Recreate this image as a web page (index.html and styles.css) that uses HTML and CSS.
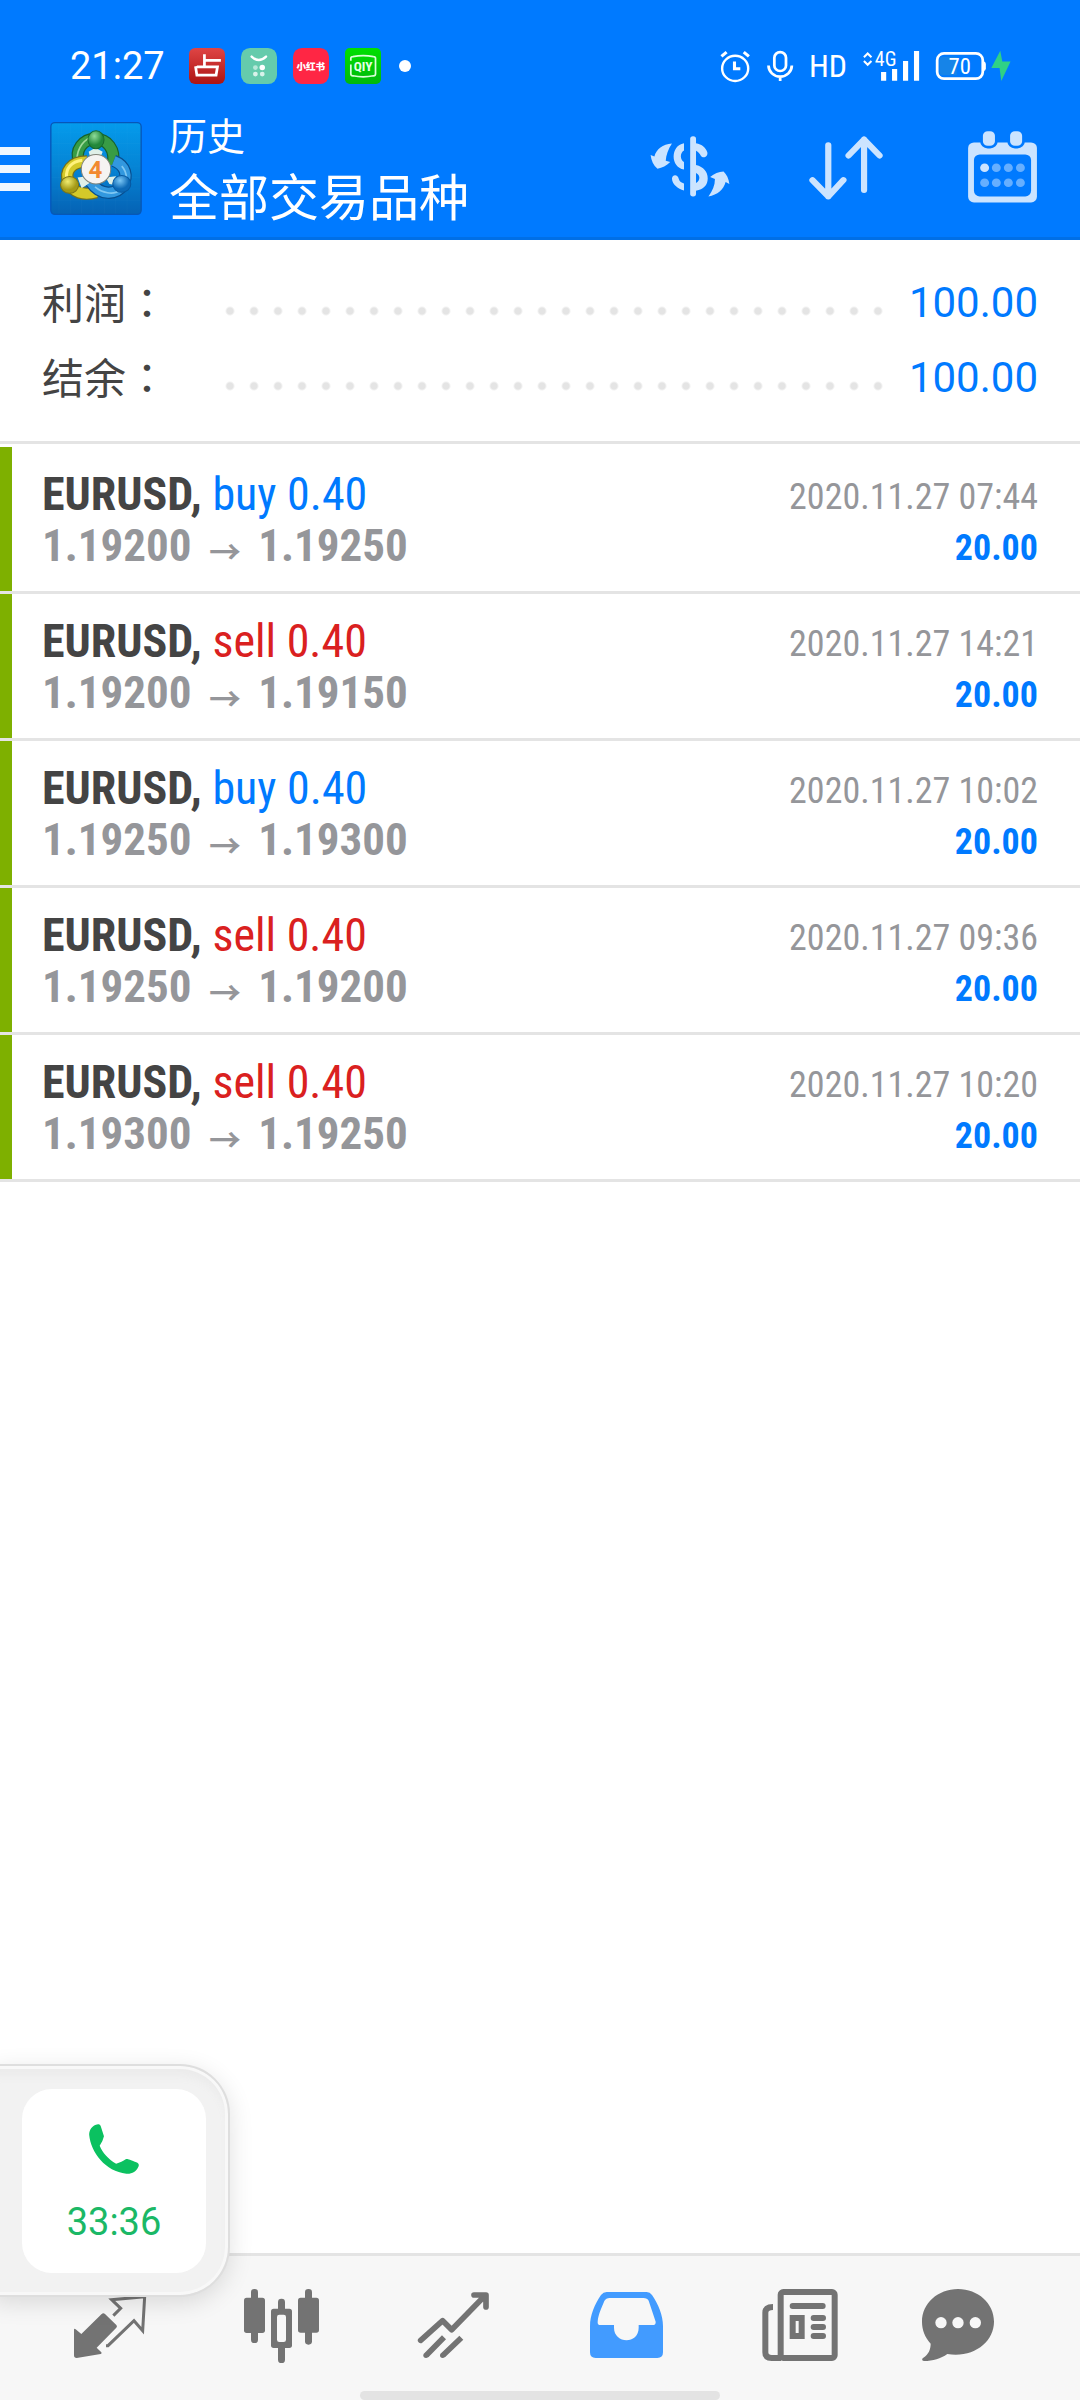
FILE: index.html
```html
<!DOCTYPE html>
<html lang="zh-CN">
<head>
<meta charset="utf-8">
<meta name="viewport" content="width=device-width, initial-scale=1">
<title>历史</title>
<link rel="stylesheet" href="styles.css">
</head>
<body>
<div class="app">
  <header class="header">
    <div class="status">
      <div class="status-left">
        <span class="time">21:27</span>
        <svg class="badge" viewBox="549 145 105 105"><defs><linearGradient id="red" x2="0" y2="1"><stop stop-color="#df4545"/><stop offset="1" stop-color="#ad1412"/></linearGradient></defs><rect x="549" y="145" width="105" height="105" rx="18" fill="url(#red)"/><path d="M594 163v33M594 181h48M568 198l4 26h56l4-24h-60" fill="none" stroke="#fff" stroke-width="8"/></svg>
        <svg class="badge" viewBox="700 145 105 105"><rect x="700" y="145" width="105" height="105" rx="26" fill="#65cbac"/><path d="M731 170q21 20 42 0" fill="none" stroke="#fff" stroke-width="7" stroke-linecap="round"/><circle cx="742" cy="202" r="7" fill="#b8e8d9"/><circle cx="762" cy="202" r="8" fill="#fff"/><circle cx="742" cy="221" r="7" fill="#d8f2ea"/><circle cx="762" cy="221" r="7" fill="#d8f2ea"/></svg>
        <svg class="badge" viewBox="851 145 105 105"><rect x="851" y="145" width="105" height="105" rx="26" fill="#ff2644"/><text x="903" y="209" class="badge-book">小红书</text></svg>
        <svg class="badge" viewBox="1002 145 105 105"><defs><linearGradient id="grn" x2="0" y2="1"><stop stop-color="#00e000"/><stop offset="1" stop-color="#00b80c"/></linearGradient></defs><rect x="1002" y="145" width="105" height="105" rx="14" fill="url(#grn)"/><path d="M1019 182v-7q0-5 6-5 30-6 60 0 6 0 6 5v46q0 5-6 5-30 6-60 0-6 0-6-5v-28" fill="none" stroke="#d8ffd8" stroke-width="5"/><text x="1055" y="213" class="badge-qiy">QIY</text></svg>
        <span class="more-dot"></span>
      </div>
      <div class="status-right">
        <svg width="32" height="36" viewBox="522 139 93 105" fill="none" stroke="#fff" stroke-width="7"><g transform="scale(1 .968)"><circle cx="569" cy="205" r="38"/><path d="M567 184v22h17" stroke-width="9"/><path d="M529 169l15-13M594 156l15 13" stroke-width="9"/></g></svg>
        <svg width="28" height="36" viewBox="659 139 81 105" fill="none" stroke="#fff" stroke-width="8"><g transform="scale(1 .968)"><rect x="683" y="156" width="34" height="57" rx="17"/><path d="M666 196a34 34 0 0 0 68 0M700 230v13"/></g></svg>
        <span class="hd">HD</span>
        <svg width="58" height="36" viewBox="929 139 168 105"><path d="M934 166l11-11 11 11M934 177l11 11 11-11" fill="none" stroke="#fff" stroke-width="6"/><text x="966" y="192" class="net">4G</text><g transform="scale(1 .968)"><path d="M984 216h15v26h-15zM1016 207h15v35h-15zM1048 183h15v59h-15zM1080 153h15v89h-15z" fill="#fff"/></g></svg>
        <svg width="76" height="36" viewBox="1147 139 221 105"><g transform="scale(1 .968)"><rect x="1153" y="160" width="133" height="76" rx="20" fill="none" stroke="#fff" stroke-width="8"/><path d="M1170 170h40v56h-40q-10 0-10-10v-36q0-10 10-10z" fill="#1684e8"/><path d="M1288 183q7 3 7 9v13q0 6-7 9z" fill="#fff"/><path d="M1337 152l-26 52h24l5 39 27-59h-24z" fill="#2fd186"/></g><text x="1219" y="214" class="charge">70</text></svg>
      </div>
    </div>
    <div class="toolbar">
      <button class="menu" aria-label="菜单"><i></i><i></i><i></i></button>
      <svg class="logo" viewBox="60 66 274 278">
        <defs>
          <linearGradient id="lb" x2="0" y2="1"><stop stop-color="#049bec"/><stop offset=".5" stop-color="#0583d4"/><stop offset="1" stop-color="#0562b4"/></linearGradient>
          <radialGradient id="lg" cx=".4" cy=".3"><stop stop-color="#8fdc9a"/><stop offset="1" stop-color="#22883a"/></radialGradient>
          <radialGradient id="ly" cx=".4" cy=".3"><stop stop-color="#f0ec70"/><stop offset="1" stop-color="#a49a16"/></radialGradient>
          <radialGradient id="lu" cx=".4" cy=".3"><stop stop-color="#7cc8f6"/><stop offset="1" stop-color="#0c69b6"/></radialGradient>
        </defs>
        <rect x="62" y="68" width="270" height="274" rx="12" fill="url(#lb)" stroke="#0757b8" stroke-width="4"/>
        <path d="M86 70v270M120 70v270M154 70v270M188 70v270M222 70v270M256 70v270M290 70v270M64 96h266M64 130h266M64 164h266M64 198h266M64 232h266M64 266h266M64 300h266" stroke="#fff" stroke-opacity=".04" stroke-width="2"/>
        <path d="M148 190C130 148 160 117 195 117s62 30 52 78" fill="none" stroke="#17612c" stroke-width="37"/>
        <path d="M148 190C130 148 160 117 195 117s62 30 52 78" fill="none" stroke="#389c45" stroke-width="30"/>
        <path d="M140 178C141 143 163 115 188 110" fill="none" stroke="#9fd99a" stroke-width="5"/>
        <path d="M170 184C122 184 102 214 115 246s45 40 83 30" fill="none" stroke="#75701a" stroke-width="37"/>
        <path d="M170 184C122 184 102 214 115 246s45 40 83 30" fill="none" stroke="#d4c929" stroke-width="30"/>
        <path d="M156 180C122 184 107 206 109 230" fill="none" stroke="#fff27c" stroke-width="9"/>
        <path d="M250 182C286 196 294 228 276 256s-66 32-94-10" fill="none" stroke="#084e8e" stroke-width="37"/>
        <path d="M250 182C286 196 294 228 276 256s-66 32-94-10" fill="none" stroke="#3298df" stroke-width="30"/>
        <path d="M274 198C294 220 291 248 270 268s-57 8-76-8" fill="none" stroke="#80c8f2" stroke-width="5"/>
        <path d="M175 155l20-12 22 12-8 20h-28zM142 232l28-4 8 20-24 16zM226 232l30-4 6 28-25-5z" fill="#dff0e8"/>
        <ellipse cx="197" cy="119" rx="24" ry="27" fill="url(#lg)" stroke="#176a2d" stroke-width="3"/>
        <ellipse cx="118" cy="254" rx="27" ry="25" fill="url(#ly)" stroke="#7c7515" stroke-width="3"/>
        <ellipse cx="274" cy="251" rx="27" ry="25" fill="url(#lu)" stroke="#0758a0" stroke-width="3"/>
        <circle cx="197" cy="207" r="44" fill="#f5f4f2" stroke="#80847a" stroke-width="3"/>
        <text x="195" y="234" class="logo-num">4</text>
      </svg>
      <div class="titles">
        <h1>历史</h1>
        <p>全部交易品种</p>
      </div>
      <div class="actions">
        <button aria-label="货币"><svg viewBox="296 350 279 279" fill="#cce4ff"><g transform="scale(1 .968)"><path d="M383 429c-27 2-45 17-51 39l-11-4c2 17 8 31 20 41 14-3 26-8 37-20l-13-4c1-17 7-35 18-52z"/><path d="M489 588c27-4 44-20 50-43l11 6c-2-17-8-29-17-38-14 1-27 6-39 17l14 6c0 19-7 36-19 52z"/><rect x="436" y="407" width="17" height="181" rx="8"/><path d="M418 428c-40 7-40 72 0 79v-22c-12-8-12-28 0-35zM383 534c2-14 18-12 20 2 2 8 8 11 15 13v21c-18-5-34-18-35-36zM453 428c17 3 29 13 33 28 2 13-12 20-19 10-3-6-7-11-14-15zM453 494c22 6 34 20 34 40s-12 32-34 37v-23c13-7 13-24 0-30z"/></g></svg></button>
        <button aria-label="排序"><svg viewBox="749 350 279 279" fill="none" stroke="#cce4ff" stroke-width="18" stroke-linecap="round" stroke-linejoin="round"><g transform="scale(1 .968)"><path d="M837 434v154M791 539l46 49 44-49M941 569V417M896 465l45-48 45 48"/></g></svg></button>
        <button aria-label="日历"><svg viewBox="1202 350 279 279"><g transform="scale(1 .968)"><rect x="1243" y="426" width="200" height="180" rx="17" fill="#cce4ff"/><rect x="1260" y="462" width="166" height="126" rx="17" fill="#007aff"/><g fill="#cce4ff" stroke="#007aff" stroke-width="8"><rect x="1282" y="388" width="43" height="52" rx="18"/><rect x="1361" y="388" width="43" height="52" rx="18"/></g><g fill="#66afff"><circle cx="1291" cy="502" r="13" fill="#cce4ff"/><circle cx="1325" cy="502" r="13"/><circle cx="1360" cy="502" r="13"/><circle cx="1395" cy="502" r="13"/><circle cx="1291" cy="547" r="13"/><circle cx="1325" cy="547" r="13"/><circle cx="1360" cy="547" r="13"/><circle cx="1395" cy="547" r="13"/></g></g></svg></button>
      </div>
    </div>
  </header>

  <main class="content">
    <dl class="totals">
      <div><dt>利润<span class="colon" lang="zh-TW">：</span></dt><dd>100.00</dd></div>
      <div><dt>结余<span class="colon" lang="zh-TW">：</span></dt><dd>100.00</dd></div>
    </dl>
    <ul class="deals">
      <li><div><p class="symbol"><b>EURUSD,</b> <span class="buy">buy 0.40</span></p><p class="price">1.19200 <span class="arrow">→</span> 1.19250</p></div><div class="result"><time>2020.11.27 07:44</time><strong>20.00</strong></div></li>
      <li><div><p class="symbol"><b>EURUSD,</b> <span class="sell">sell 0.40</span></p><p class="price">1.19200 <span class="arrow">→</span> 1.19150</p></div><div class="result"><time>2020.11.27 14:21</time><strong>20.00</strong></div></li>
      <li><div><p class="symbol"><b>EURUSD,</b> <span class="buy">buy 0.40</span></p><p class="price">1.19250 <span class="arrow">→</span> 1.19300</p></div><div class="result"><time>2020.11.27 10:02</time><strong>20.00</strong></div></li>
      <li><div><p class="symbol"><b>EURUSD,</b> <span class="sell">sell 0.40</span></p><p class="price">1.19250 <span class="arrow">→</span> 1.19200</p></div><div class="result"><time>2020.11.27 09:36</time><strong>20.00</strong></div></li>
      <li><div><p class="symbol"><b>EURUSD,</b> <span class="sell">sell 0.40</span></p><p class="price">1.19300 <span class="arrow">→</span> 1.19250</p></div><div class="result"><time>2020.11.27 10:20</time><strong>20.00</strong></div></li>
    </ul>
  </main>

  <nav class="tabs">
    <a href="#quotes" aria-label="行情"><svg viewBox="186 711 288 288"><path d="M222 870q0-6 5-2l17 14 61-60q5-5 10 0l34 33q4 4 0 8l-59 60 14 14q3 4-2 5l-72 12q-8 0-8-8z" fill="#737373"/><path d="M340 827l22-22-27-26 99-9-6 102-26-30-78 75h-6" fill="none" stroke="#737373" stroke-width="9"/></svg></a>
    <a href="#chart" aria-label="图表"><svg viewBox="702 711 288 288" fill="#737373"><rect x="753" y="747" width="21" height="162" rx="10"/><rect x="732" y="773" width="63" height="106" rx="8"/><rect x="915" y="747" width="21" height="167" rx="10"/><rect x="894" y="773" width="63" height="105" rx="8"/><rect x="834" y="776" width="21" height="193" rx="10"/><rect x="813" y="806" width="63" height="118" rx="8"/><rect x="831" y="824" width="27" height="82" rx="7" fill="#f7f7f7"/></svg></a>
    <a href="#trade" aria-label="交易"><svg viewBox="138 141 288 288" fill="none" stroke="#737373" stroke-width="17" stroke-linejoin="round"><path d="M182 331l66-59 27 27L376 196M342 195h36v36" stroke-linecap="round"/><path d="M252 322l-53 54M304 323l-55 53"/><g fill="#737373" stroke="none"><circle cx="198" cy="376" r="8"/><circle cx="248" cy="376" r="8"/></g></svg></a>
    <a href="#history" aria-label="历史" aria-current="page"><svg viewBox="654 141 288 288"><path d="M740 186h120q10 0 16 9c19 28 33 60 33 94v78q0 17-17 17H707q-17 0-17-17v-78c0-34 14-66 33-94q7-9 17-9z" fill="#429bff"/><path d="M749 204h101q12 0 16 8l21 63q1 10-9 10h-42v8c0 51-74 49-74 0v-8h-41q-9 0-8-10c2-23 12-42 20-62q5-9 16-9z" fill="#f7f7f7"/></svg></a>
    <a href="#news" aria-label="新闻"><svg viewBox="90 141 288 288" fill="none" stroke="#737373" stroke-width="18"><rect x="182" y="186" width="162" height="198" rx="8"/><path d="M159 231q-23 0-23 17v119q0 17 19 17h28"/><path d="M218 228h90M281 264h28M281 291h28M281 318h28" stroke-linecap="round"/><rect x="218" y="264" width="27" height="54"/></svg></a>
    <a href="#messages" aria-label="消息"><svg viewBox="606 141 288 288"><path d="M714 177c60 0 108 43 108 98 0 61-62 110-140 97-20 14-43 21-70 21-7 0-7-7-2-10 16-10 22-25 22-42-17-19-26-41-26-66 0-55 48-98 108-98z" fill="#737373"/><g fill="#f7f7f7"><circle cx="663" cy="278" r="17"/><circle cx="714" cy="278" r="17"/><circle cx="766" cy="278" r="17"/></g></svg></a>
    <span class="home-bar"></span>
  </nav>

  <button class="call">
    <span class="call-card">
      <svg viewBox="267 251 151 152"><path d="M294 252q6-1 8 5l10 31q-3 14-13 29c8 20 26 41 50 55 11-5 22-8 29-14 6-2 10 1 32 9 8 2 9 8 7 13-7 17-20 23-37 22-63-6-108-64-113-118 0-14 9-30 27-32z" fill="#0bc160"/></svg>
      <span>33:36</span>
    </span>
  </button>
</div>
</body>
</html>
```
FILE: styles.css
```css
* { box-sizing: border-box; }

body {
  margin: 0;
  background: #fff;
  color: #444;
  font-family: Roboto, "Noto Sans CJK SC", sans-serif;
}

h1, p, dl, dd, ul { margin: 0; padding: 0; }

button {
  padding: 0;
  border: 0;
  background: none;
  font: inherit;
}

svg { display: block; }

.app {
  position: relative;
  display: flex;
  flex-direction: column;
  min-height: 100vh;
  overflow: hidden;
}

/* Header */
.header {
  background: #007aff;
  border-bottom: 3px solid #006fe6;
  color: #fff;
}

.status {
  display: flex;
  justify-content: space-between;
  height: 100px;
  padding: 34px 69px 0 70px;
}

.status-left, .status-right {
  display: flex;
  align-items: center;
  height: 64px;
  gap: 16px;
}

.status-right { gap: 15px; }

.time {
  width: 103px;
  font: 400 38px Roboto, sans-serif;
}

.badge { width: 36px; height: 36px; }

.badge-book {
  font: 900 28px "Noto Sans CJK SC", sans-serif;
  fill: #fff;
  text-anchor: middle;
}

.badge-qiy {
  font: 700 39px "Roboto Condensed", Roboto, sans-serif;
  fill: #e6ffe6;
  text-anchor: middle;
}

.more-dot {
  width: 12px;
  height: 12px;
  margin-left: 2px;
  border-radius: 50%;
  background: #fff;
}

.hd { font: 400 32px "Roboto Condensed", Roboto, sans-serif; }

.net {
  font: 400 58px "Roboto Condensed", Roboto, sans-serif;
  fill: #fff;
}

.charge {
  font: 400 66px "Roboto Condensed", Roboto, sans-serif;
  fill: #fff;
  text-anchor: middle;
}

.toolbar {
  display: flex;
  align-items: center;
  height: 137px;
  padding-right: 30px;
}

.menu {
  display: grid;
  gap: 10px;
  width: 30px;
  margin-right: 20px;
}

.menu i {
  height: 8px;
  background: #eef6ff;
}

.logo { width: 92px; height: 93px; }

.logo-num {
  font: 700 72px Roboto, sans-serif;
  fill: #f28a30;
  text-anchor: middle;
}

.titles {
  flex: 1;
  margin-left: 27px;
  padding-bottom: 10px;
  font-family: "Noto Sans CJK SC", sans-serif;
  font-weight: 400;
  line-height: 60px;
  white-space: nowrap;
}

.titles h1 {
  font-size: 38px;
  font-weight: inherit;
}

.titles p { font-size: 50px; }

.actions { display: flex; gap: 60px; }
.actions svg { width: 96px; height: 96px; }

/* Totals */
.content { flex: 1; }

.totals {
  padding: 25px 42px 26px;
  border-bottom: 3px solid #e4e4e4;
  font-size: 42px;
}

.totals div {
  display: flex;
  align-items: center;
  height: 75px;
}

.totals dt {
  width: 176px;
  padding-bottom: 4px;
  font-family: "Noto Sans CJK SC", sans-serif;
}

.totals .colon { font-family: "Noto Sans CJK TC", sans-serif; }

.totals dd {
  display: flex;
  flex: 1;
  align-items: center;
  justify-content: space-between;
  color: #007aff;
}

.totals dd::before {
  content: "";
  width: calc(100% - 148px);
  height: 24px;
  margin-top: 16px;
  background: radial-gradient(circle, #e4e4e4 3px, transparent 5px) 0 0 / 24px 24px;
}

/* Deals */
.deals {
  padding-top: 3px;
  list-style: none;
}

.deals li {
  display: flex;
  justify-content: space-between;
  height: 147px;
  padding: 22px 42px 0;
  border-bottom: 3px solid #e4e4e4;
  background: linear-gradient(#7eb000, #7eb000) 0 0 / 12px 100% no-repeat;
  background-clip: padding-box;
  font-family: "Roboto Condensed", Roboto, sans-serif;
  white-space: nowrap;
}

.symbol {
  font-size: 46px;
  line-height: 51px;
}

.buy { color: #007aff; }
.sell { color: #da2020; }

.price {
  color: #95969a;
  font-size: 45px;
  font-weight: 700;
  line-height: 51px;
}

.arrow {
  display: inline-block;
  margin: 0 7px;
  font: 700 32px/44px "Noto Sans CJK SC", sans-serif;
  vertical-align: text-bottom;
}

.result {
  display: flex;
  flex-direction: column;
  align-items: flex-end;
  padding-top: 3px;
  font-size: 36px;
  line-height: 51px;
}

.result time { color: #95969a; }
.result strong { color: #007aff; }

/* Bottom tabs */
.tabs {
  position: relative;
  display: grid;
  grid-template-columns: repeat(6, 1fr);
  padding: 21px 24px 27px;
  border-top: 3px solid #e4e4e4;
  background: #f7f7f7;
}

.tabs a { display: grid; justify-items: center; }
.tabs svg { width: 96px; height: 96px; }

.home-bar {
  position: absolute;
  bottom: 0;
  left: 50%;
  width: 360px;
  height: 9px;
  margin-left: -180px;
  border-radius: 5px;
  background: #e3e3e3;
}

/* Floating call window, docked to the left edge */
.call {
  position: absolute;
  bottom: 103px;
  left: -8px;
  padding: 23px 22px 22px 30px;
  border: 2px solid #dedede;
  border-left: 0;
  border-radius: 0 50px 50px 0;
  background: #f2f2f2;
  box-shadow: inset 0 0 0 3px #f8f8f8, inset 0 10px 8px #ebebeb, 0 6px 24px rgba(0, 0, 0, .12);
}

.call-card {
  display: flex;
  flex-direction: column;
  align-items: center;
  width: 184px;
  height: 184px;
  padding-top: 35px;
  border-radius: 30px;
  background: #fff;
  color: #1bb866;
  font-size: 38px;
  line-height: 44px;
}

.call-card svg {
  width: 50px;
  height: 50px;
  margin-bottom: 26px;
}
```
